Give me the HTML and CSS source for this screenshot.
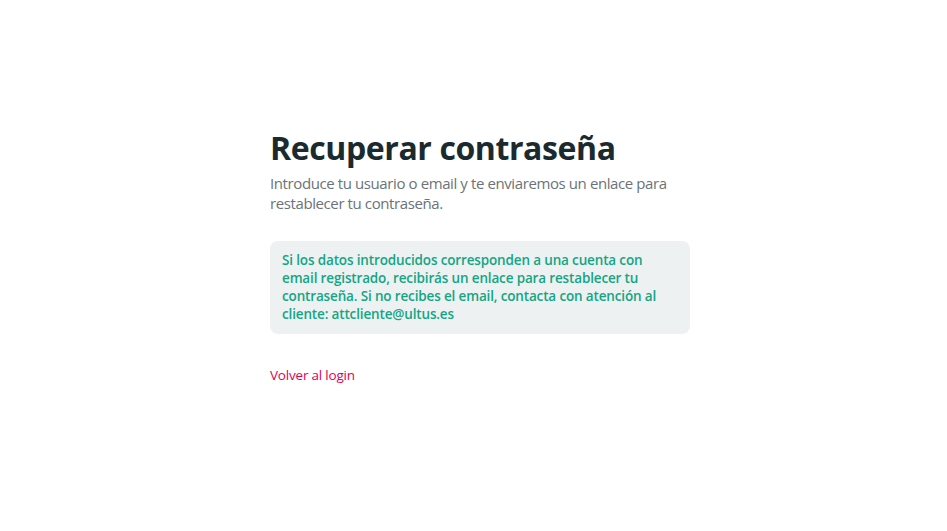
FILE: index.html
```html
<!DOCTYPE html>
<html lang="es">
<head>
<meta charset="utf-8">
<title>Recuperar contraseña</title>
<link rel="stylesheet" href="styles.css">
</head>
<body>
<main class="page">
  <section class="panel">
    <h1 class="title">Recuperar contraseña</h1>
    <p class="intro">Introduce tu usuario o email y te enviaremos un enlace para restablecer tu contraseña.</p>
    <div class="notice">Si los datos introducidos corresponden a una cuenta con email registrado, recibirás un enlace para restablecer tu contraseña. Si no recibes el email, contacta con atención al cliente: attcliente@ultus.es</div>
    <a class="back" href="#">Volver al login</a>
  </section>
</main>
</body>
</html>
```

FILE: styles.css
```css
html, body {
  margin: 0;
  padding: 0;
  background: #ffffff;
}
body {
  font-family: "Open Sans", "Noto Sans", sans-serif;
}
.page {
  display: flex;
  justify-content: center;
  padding-top: 126px;
}
.panel {
  width: 420px;
  margin-left: 13px;
  display: flex;
  flex-direction: column;
}
.title {
  margin: 0;
  font-size: 32px;
  line-height: 44px;
  font-weight: 700;
  letter-spacing: -0.4px;
  color: #1b2a2f;
}
.intro {
  margin: 3px 0 0;
  font-size: 15px;
  line-height: 20px;
  letter-spacing: -0.4px;
  color: #6b7378;
}
.notice {
  margin-top: 28px;
  background: #eef1f2;
  border-radius: 8px;
  padding: 10px 16px 11px 12px;
  font-size: 13.5px;
  line-height: 18px;
  font-weight: 600;
  letter-spacing: -0.15px;
  color: #13a584;
}
.back {
  margin-top: 32px;
  align-self: flex-start;
  font-size: 13.5px;
  line-height: 18px;
  font-weight: 500;
  letter-spacing: -0.2px;
  color: #e4004f;
  text-decoration: none;
}
```
